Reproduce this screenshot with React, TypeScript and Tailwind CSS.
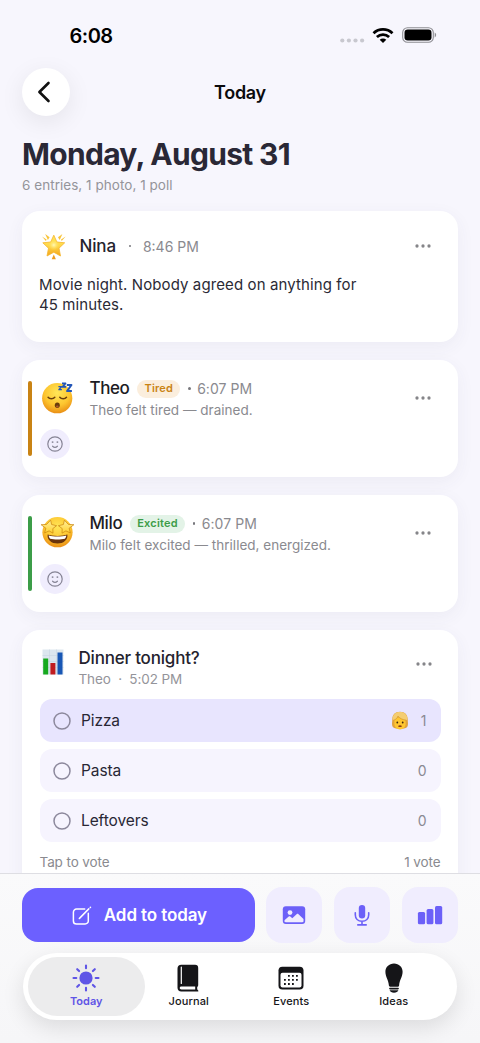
import type { ReactNode } from 'react'

const INTER = "font-['Inter',sans-serif]"

interface OptionProps {
  label: string
  votes: number
  selected?: boolean
}

function GlowingStar() {
  return (
    <svg viewBox="0 0 26 27" className="h-[27px] w-[26px]">
      <defs>
        <linearGradient id="star" x1="0" y1="0" x2="0" y2="1">
          <stop offset="0" stopColor="#ffe65c" />
          <stop offset=".5" stopColor="#ffd84a" />
          <stop offset="1" stopColor="#f3a51c" />
        </linearGradient>
        <radialGradient id="starGlow">
          <stop offset="0" stopColor="#fff8bb" />
          <stop offset="1" stopColor="#ffe14f" stopOpacity="0" />
        </radialGradient>
      </defs>
      <path d="M12.8 2.2 15.9 9l7.8.8-5.7 5.4 1.5 7.8-6.7-3.8L6 23l1.5-7.8-5.7-5.4L9.7 9Z" fill="url(#star)" stroke="#f5b52c" strokeWidth=".8" strokeLinejoin="round" />
      <circle cx="12.8" cy="12" r="5.5" fill="url(#starGlow)" />
      <g fill="#f8c338">
        <path d="M4.2.9 8.6 4.3 6.9 7Z" />
        <path d="M21.4.9 17 4.3 18.7 7Z" />
        <path d="m1 3.6 4.6 2.9-.7 1.6Z" />
        <path d="m24.6 3.6-4.6 2.9.7 1.6Z" />
        <path d="m12.8 21.4 2.1 4.8h-4.2Z" fill="#ee9b1c" />
      </g>
    </svg>
  )
}

function FaceGradient({ id }: { id: string }) {
  return (
    <radialGradient id={id} cx=".5" cy=".32" r=".7">
      <stop offset="0" stopColor="#ffe658" />
      <stop offset=".6" stopColor="#fdc52f" />
      <stop offset="1" stopColor="#e88b13" />
    </radialGradient>
  )
}

function SleepingFace() {
  return (
    <svg viewBox="0 0 33 33" className="size-[33px]">
      <defs>
        <FaceGradient id="sleepy" />
      </defs>
      <circle cx="17.2" cy="17.2" r="15.1" fill="url(#sleepy)" />
      <g fill="none" stroke="#6a3d0b" strokeWidth="1.5" strokeLinecap="round">
        <path d="M8.1 16.3c1.5 2 5 2 6.700 0M19.800 16.300c1.600 2 5.100 2 6.700 0" />
      </g>
      <ellipse cx="17.3" cy="24.3" rx="2.5" ry="2.7" fill="#6a3d0b" />
      <ellipse cx="17.3" cy="25.6" rx="1.3" ry="1" fill="#b35a2c" />
      <g fill="none" stroke="#2356b8" strokeLinejoin="round">
        <path strokeWidth="1.3" d="M18.4 5.7h3.100l-2.600 3h3" />
        <path strokeWidth="1.6" d="M22 2.4h3.600l-3.100 3.500h3.700" />
        <path strokeWidth="2.1" d="M26.8 4h4.600l-4.300 6h4.800" />
      </g>
    </svg>
  )
}

function StarEyesFace() {
  return (
    <svg viewBox="0 0 34 33" className="h-[33px] w-[34px]">
      <defs>
        <FaceGradient id="excited" />
        <linearGradient id="eye" x1="0" y1="0" x2="0" y2="1">
          <stop offset="0" stopColor="#fff09b" />
          <stop offset="1" stopColor="#ffd02e" />
        </linearGradient>
      </defs>
      <circle cx="17.5" cy="16.2" r="15.1" fill="url(#excited)" />
      <path d="M7.6 18.6c4.6 1.8 15.2 1.8 19.8 0 .7 5.6-4 9-9.900 9s-10.600-3.400-9.900-9Z" fill="#6a340b" />
      <path d="M8.7 19.6c4.7 1.3 12.900 1.300 17.600 0-.1 1.400-.6 2.400-1.400 3.100-4.200.9-10.600.9-14.800 0-.8-.7-1.300-1.700-1.400-3.100Z" fill="#fff" />
      <g fill="url(#eye)" stroke="#c9830e" strokeWidth=".7" strokeLinejoin="round">
        <path d="m10.600 4.200 1 4.300 5 1.200-3.800 2.900.2 4.600-3.900-2.300-4.500 2 1.300-4.600L1.100 8.700l5.500-.3Z" />
        <path d="m24.400 4.200-1 4.300-5 1.200 3.800 2.900-.2 4.600 3.900-2.300 4.500 2-1.300-4.600 4.800-3.600-5.500-.3Z" />
      </g>
    </svg>
  )
}

function BarChartEmoji() {
  return (
    <svg viewBox="0 0 22 26" className="h-[26px] w-[22px]">
      <path fill="#dce6ef" d="M.5.5h21v25H.5z" />
      <path stroke="#c8d5e0" strokeWidth=".6" d="M.5 6.5h21M.5 12.5h21M.5 18.5h21M7.5.5v25M14.5.5v25" />
      <path fill="#16a91f" d="M1.200 9.500h5v16h-5z" />
      <path fill="#c11c20" d="M8.400 14h5v11.500h-5z" />
      <path fill="#1857b5" d="M15.500 3.500h5v22h-5z" />
    </svg>
  )
}

function VoterEmoji() {
  return (
    <svg viewBox="0 0 18 19" className="h-[19px] w-[18px]">
      <path d="M9 .8C4 .8 1.300 3.800 1.300 8.500c0 3-.9 5.200.5 7.400 1.600 1.600 4.700 1.900 7.200 1.900s5.600-.3 7.200-1.900c1.400-2.200.5-4.400.5-7.400C16.700 3.800 14 .8 9 .8Z" fill="#e0a23a" />
      <path d="M3.400 6.500h11.200v6c0 3.500-2.400 5.900-5.600 5.900s-5.600-2.400-5.600-5.900Z" fill="#ffc62f" />
      <path d="M1.500 8.400C1.700 3.500 4.500.9 9 .9s7.300 2.600 7.500 7.500l-1.500.8c-2.800-.3-6.400-1.700-8-4C6.300 7 4.900 8.300 3.200 9Z" fill="#f4cd72" />
      <path d="M3.200 9C4.900 8.300 6.300 7 7 5.200c1.600 2.300 5.200 3.700 8 4" stroke="#d29427" strokeWidth=".7" fill="none" />
      <ellipse cx="6.300" cy="11.500" rx=".9" ry="1.100" fill="#3f2409" />
      <ellipse cx="11.700" cy="11.500" rx=".9" ry="1.100" fill="#3f2409" />
      <path d="M7 14.900c1.300-.8 2.700-.8 4 0-.8 1.600-3.200 1.600-4 0Z" fill="#8d3a14" />
    </svg>
  )
}

function More() {
  return (
    <svg viewBox="0 0 16 4" className="h-1 w-4 shrink-0 fill-[#858589]">
      <circle cx="2" cy="2" r="1.650" />
      <circle cx="8" cy="2" r="1.650" />
      <circle cx="14" cy="2" r="1.650" />
    </svg>
  )
}

function Card({ className, children }: { className: string; children: ReactNode }) {
  return (
    <section className={`shrink-0 rounded-[18px] bg-white shadow-[0_5px_18px_rgba(70,60,110,0.06)] ${className}`}>
      {children}
    </section>
  )
}

interface MoodProps {
  name: string
  mood: string
  note: string
  emoji: ReactNode
  barClass: string
  badgeClass: string
}

function MoodCard({ name, mood, note, emoji, barClass, badgeClass }: MoodProps) {
  return (
    <Card className="flex h-[117px] pr-[27px] pl-1.5 pt-[21px]">
      <span className={`h-[74.5px] w-1 rounded-full ${barClass}`} />
      <div className="ml-2 flex flex-1 flex-col">
        <div className="flex h-12">
          <div className="flex w-[49.5px] shrink-0 items-start">{emoji}</div>
          <div className="flex-1">
            <div className="flex h-[15px] items-center">
              <span className="text-[17px] font-medium tracking-[-0.4px] text-[#1d1c24]">{name}</span>
              <span className={`ml-2 flex h-[18px] items-center rounded-full px-[7px] text-[11px] font-semibold tracking-[0.2px] ${badgeClass}`}>
                {mood}
              </span>
              <span className="ml-2 size-[2.5px] rounded-full bg-[#77777c]" />
              <span className="ml-[6.500px] text-[14px] tracking-[0.05px] text-[#8a8a8f]">6:07 PM</span>
            </div>
            <p className="mt-[4px] text-[13.5px] leading-5 tracking-[0.02px] text-[#8a8a8f]">{note}</p>
          </div>
          <div className="flex h-[33px] items-center">
            <More />
          </div>
        </div>
        <div className="flex size-[30px] items-center justify-center rounded-full bg-[#f0edfd]">
          <svg viewBox="0 0 16 16" className="size-4" fill="none" stroke="#858394" strokeWidth="1.2" strokeLinecap="round">
            <circle cx="8" cy="8" r="7.2" />
            <path d="M5.6 10.2c1.3 1.200 3.500 1.200 4.800 0" />
            <circle cx="5.6" cy="6.1" r=".35" fill="#858394" />
            <circle cx="10.4" cy="6.1" r=".35" fill="#858394" />
          </svg>
        </div>
      </div>
    </Card>
  )
}

function PollOption({ label, votes, selected }: OptionProps) {
  return (
    <div className={`flex h-[43px] items-center rounded-[12px] px-[14px] ${selected ? 'bg-[#e8e5fe]' : 'bg-[#f6f4fe]'}`}>
      <svg viewBox="0 0 18 18" className="-ml-[0.5px] size-[18px]" fill="none" stroke="#8c889c" strokeWidth="1.5">
        <circle cx="9" cy="9" r="8" />
      </svg>
      <span className="ml-[10px] text-[15.5px] tracking-[-0.1px] text-[#292735]">{label}</span>
      <span className="ml-auto flex items-center gap-[12px] text-[14px] text-[#8a8a93]">
        {selected && <VoterEmoji />}
        {votes}
      </span>
    </div>
  )
}

function StatusBar() {
  return (
    <div className="flex h-[68px] shrink-0 items-center pr-[43.5px] pl-[69.5px] pt-[3px]">
      <span className="text-[20px] font-semibold tracking-[-0.5px] text-black">6:08</span>
      <div className="ml-auto flex items-center">
        <svg viewBox="0 0 25 5" className="mt-[10px] h-[5px] w-[25px] fill-[#c8c8cf]">
          <circle cx="2.3" cy="2.5" r="2.1" />
          <circle cx="8.9" cy="2.5" r="2.1" />
          <circle cx="15.5" cy="2.5" r="2.1" />
          <circle cx="22.1" cy="2.5" r="2.1" />
        </svg>
        <svg viewBox="0 0 22 16" className="-mt-[2px] ml-[7.5px] h-4 w-[22px]" fill="none" stroke="#000" strokeWidth="2.8">
          <path d="M1.5 6.2c5.400-5.100 13.600-5.100 19 0" />
          <path d="M4.9 10c3.500-3.200 8.700-3.200 12.200 0" />
          <path d="M7.7 12.700c1.900-1.700 4.700-1.700 6.600 0L11 16Z" fill="#000" stroke="none" />
        </svg>
        <svg viewBox="0 0 35 16" className="-mt-[2px] ml-[7.5px] h-4 w-[35px]">
          <rect x=".7" y=".7" width="30.6" height="14.6" rx="4.8" fill="none" stroke="#8e8e93" strokeWidth="1.1" />
          <rect x="2.5" y="2.5" width="27" height="11" rx="3.2" />
          <path d="M32.7 5.6c1.900.8 1.900 4 0 4.800Z" fill="#8e8e93" />
        </svg>
      </div>
    </div>
  )
}

function ActionButton({ children }: { children: ReactNode }) {
  return <button className="flex h-14 w-[56.5px] items-center justify-center rounded-[16px] bg-[#f0edfe] text-[#6c60f8]">{children}</button>
}

function Tab({ label, active, children }: { label: string; active?: boolean; children: ReactNode }) {
  return (
    <div className={`relative flex w-[102.5px] flex-col items-center pt-[9px] ${active ? 'text-[#5f55e6]' : 'text-[#151518]'}`}>
      {active && <span className="absolute top-1 -right-[7px] -left-[7.5px] h-[59px] rounded-full bg-[#ececed]" />}
      <div className="relative flex h-8 items-center">{children}</div>
      <span className={`relative text-[11px] leading-[14px] ${active ? 'font-semibold' : 'font-medium tracking-[0.1px]'}`}>{label}</span>
    </div>
  )
}

function BottomBar() {
  return (
    <footer className="h-[170px] shrink-0 border-t border-[#dedee3] bg-[#fafafb] bg-linear-to-b from-[#fafafb] to-[#f6f6f8] px-[22px] pt-[13px]">
      <div className="flex items-center">
        <button className="flex h-[54.5px] w-[233px] items-center justify-center rounded-[16px] bg-[#6c60ff] pt-[2px] pl-[2px] text-white">
          <svg viewBox="0 0 20 20" className="size-5" fill="none" stroke="currentColor" strokeWidth="1.5" strokeLinecap="round" strokeLinejoin="round">
            <path d="M12.7 3.100H4.500a3.100 3.100 0 0 0-3.100 3.100v8.700A3.100 3.100 0 0 0 4.500 18h8.700a3.100 3.100 0 0 0 3.100-3.100V7.300" />
            <path d="m7.700 12.100 9.100-9.200M7.300 12.500l.4-.4M18.300 1.400l.2-.2" />
          </svg>
          <span className="ml-[12px] text-[17px] font-semibold tracking-[-0.1px]">Add to today</span>
        </button>
        <div className="ml-[11px] flex gap-[11.3px]">
          <ActionButton>
            <svg viewBox="0 0 24 20" className="h-5 w-6">
              <rect x=".8" y="1.2" width="22.4" height="17.8" rx="3" fill="currentColor" />
              <circle cx="8" cy="7.6" r="2.4" fill="#f0edfe" />
              <path d="m2.500 15.300 4.200-3.700c.6-.5 1-.5 1.600 0l2 1.700 4.300-4.100c.7-.6 1.200-.6 1.900 0l5 4.800v2c0 .8-.4 1.200-1.200 1.200H3.700c-.8 0-1.200-.4-1.200-1.200Z" fill="#f0edfe" />
            </svg>
          </ActionButton>
          <ActionButton>
            <svg viewBox="0 0 16 22" className="h-[22px] w-4" fill="none" stroke="currentColor" strokeWidth="1.6" strokeLinecap="round">
              <rect x="4.8" y=".9" width="6.4" height="13.6" rx="3.2" fill="currentColor" stroke="none" />
              <path d="M1.300 8.800v1.900c0 3.900 2.700 6.600 6.700 6.600s6.700-2.700 6.700-6.600V8.800M8 17.300v3.600M3.800 20.900h8.400" />
            </svg>
          </ActionButton>
          <ActionButton>
            <svg viewBox="0 0 26 20" className="h-5 w-[26px]" fill="currentColor">
              <rect x=".9" y="7" width="7.2" height="12.2" rx="1.5" />
              <rect x="9.6" y="4" width="6.8" height="15.2" rx="1.5" />
              <rect x="18" y="1" width="7.2" height="18.2" rx="1.5" />
            </svg>
          </ActionButton>
        </div>
      </div>

      <nav className="mx-px mt-[10px] flex h-[67px] justify-center rounded-full bg-white shadow-[0_8px_22px_rgba(0,0,0,0.11)]">
        <Tab label="Today" active>
          <svg viewBox="0 0 28 28" className="-ml-px size-7" stroke="currentColor" strokeWidth="2.1" strokeLinecap="round">
            <circle cx="14" cy="14" r="6.6" fill="currentColor" stroke="none" />
            <path d="M14 1.500v2.800M14 23.700v2.800M1.500 14h2.800M23.700 14h2.800M5.200 5.200l1.900 1.900M20.900 20.900l1.900 1.900M5.200 22.800l1.900-1.900M20.900 7.100l1.900-1.900" />
          </svg>
        </Tab>
        <Tab label="Journal">
          <svg viewBox="0 0 22 28" className="-ml-px h-7 w-[22px]">
            <path d="M4.400.8h13.700c2 0 3.100 1.100 3.100 3.100v17.300c0 .8-.4 1.400-1 1.700v2.400l1 1.100c.5.700.2 1.100-.6 1.100H4.300C2 27.500.5 26 .5 23.700V4.700C.5 2.200 1.900.8 4.400.8Z" fill="currentColor" />
            <path d="M4.500 22.600h13.700v2.900H4.500c-2.400 0-2.400-2.900 0-2.900Z" fill="#fff" />
            <path d="M4.300 3v16.500" stroke="#fff" strokeWidth="1.2" strokeLinecap="round" />
          </svg>
        </Tab>
        <Tab label="Events">
          <svg viewBox="0 0 26 24" className="h-6 w-[26px]">
            <rect x=".5" y=".7" width="25" height="22.8" rx="3.8" fill="currentColor" />
            <rect x="2.5" y="6.7" width="21" height="14.8" rx="2" fill="#fff" />
            <g fill="currentColor">
              <path d="M10 8.900h1.800v1.800H10zM14 8.900h1.800v1.800H14zM18 8.900h1.800v1.800H18z" />
              <path d="M6 13h1.800v1.800H6zM10 13h1.800v1.800H10zM14 13h1.800v1.800H14zM18 13h1.800v1.800H18z" />
              <path d="M6 17.100h1.800v1.800H6zM10 17.100h1.800v1.800H10zM14 17.100h1.800v1.800H14z" />
            </g>
          </svg>
        </Tab>
        <Tab label="Ideas">
          <svg viewBox="0 0 18 30" className="h-[30px] w-[18px]" fill="currentColor">
            <path d="M9 .5C4 .5.4 4.100.4 8.800c0 5.200 3.200 8.200 3.500 13.800.1.800.4 1.200 1.200 1.200h7.800c.8 0 1.100-.4 1.200-1.200.3-5.600 3.500-8.600 3.500-13.800C17.600 4.100 14 .5 9 .5Z" />
            <rect x="4.1" y="24.8" width="9.8" height="1.6" rx=".8" />
            <path d="M4.600 27.300h8.800c-.5 1.500-2.200 2.400-4.400 2.400s-3.900-.9-4.400-2.400Z" />
          </svg>
        </Tab>
      </nav>
    </footer>
  )
}

export default function App() {
  return (
    <div className={`flex h-[1043px] w-[480px] flex-col overflow-hidden bg-[#f7f6fd] ${INTER}`}>
      <main className="flex min-h-0 flex-1 flex-col overflow-hidden">
        <StatusBar />
        <header className="grid h-12 shrink-0 grid-cols-[48px_1fr_48px] items-center px-[22px]">
          <button className="flex size-12 items-center justify-center rounded-full bg-white shadow-[0_6px_24px_rgba(0,0,0,0.08)]">
            <svg viewBox="0 0 14 22" className="mr-[4px] h-[22px] w-[14px]" fill="none" stroke="#111" strokeWidth="2.6" strokeLinecap="round" strokeLinejoin="round">
              <path d="M11.5 2 2.400 11l9.100 9" />
            </svg>
          </button>
          <h2 className="text-center text-[18px] font-semibold tracking-[-0.3px] text-[#0b0b0d]">Today</h2>
        </header>

        <div className="shrink-0 px-[22px] pt-[19px]">
          <h1 className="text-[30px] leading-[38px] font-bold tracking-[-0.7px] whitespace-nowrap text-[#2a2836]">Monday, August 31</h1>
          <p className="mt-[3px] text-[13.5px] leading-[18px] tracking-[0.04px] text-[#94949a]">6 entries, 1 photo, 1 poll</p>
        </div>

        <div className="mt-[17px] flex flex-col gap-[18px] px-[22px]">
          <Card className="h-[131px] pr-[27px] pl-[17px] pt-[21px]">
            <div className="flex h-7 items-center">
              <div className="ml-[2px]"><GlowingStar /></div>
              <span className="ml-[12.5px] pt-[2px] text-[17px] font-medium tracking-[-0.15px] text-[#25232e]">Nina</span>
              <span className="ml-[13px] size-[2.5px] rounded-full bg-[#77777c]" />
              <span className="ml-[11.5px] text-[14px] text-[#8a8a8f]">8:46 PM</span>
              <div className="ml-auto"><More /></div>
            </div>
            <p className="mt-[15px] text-[15px] leading-5 tracking-[0.11px] text-[#2b2a35]">
              Movie night. Nobody agreed on anything for
              <br />
              45 minutes.
            </p>
          </Card>

          <MoodCard
            name="Theo"
            mood="Tired"
            note="Theo felt tired — drained."
            emoji={<SleepingFace />}
            barClass="bg-[#c98314]"
            badgeClass="bg-[#fbeedd] text-[#c98314]"
          />
          <MoodCard
            name="Milo"
            mood="Excited"
            note="Milo felt excited — thrilled, energized."
            emoji={<StarEyesFace />}
            barClass="bg-[#3c9d48]"
            badgeClass="bg-[#e3f3e7] text-[#3c9d48]"
          />

          <Card className="h-[270px] px-[17.5px] pt-[18px]">
            <div className="flex h-[51px]">
              <div className="mt-px ml-[2.5px] w-[36.5px]"><BarChartEmoji /></div>
              <div>
                <h3 className="text-[17px] leading-5 font-medium tracking-[-0.2px] text-[#25232e]">Dinner tonight?</h3>
                <p className="mt-[2px] text-[13.5px] leading-[18px] tracking-[-0.1px] text-[#94949a]">Theo&nbsp; ·&nbsp; 5:02 PM</p>
              </div>
              <div className="mt-[14px] mr-[8.5px] ml-auto flex h-1"><More /></div>
            </div>
            <div className="flex flex-col gap-[7px]">
              <PollOption label="Pizza" votes={1} selected />
              <PollOption label="Pasta" votes={0} />
              <PollOption label="Leftovers" votes={0} />
            </div>
            <div className="mt-[11px] flex justify-between text-[13.5px] leading-[18px] tracking-[-0.1px] text-[#8a8a8f]">
              <span>Tap to vote</span>
              <span>1 vote</span>
            </div>
          </Card>
        </div>
      </main>
      <BottomBar />
    </div>
  )
}
